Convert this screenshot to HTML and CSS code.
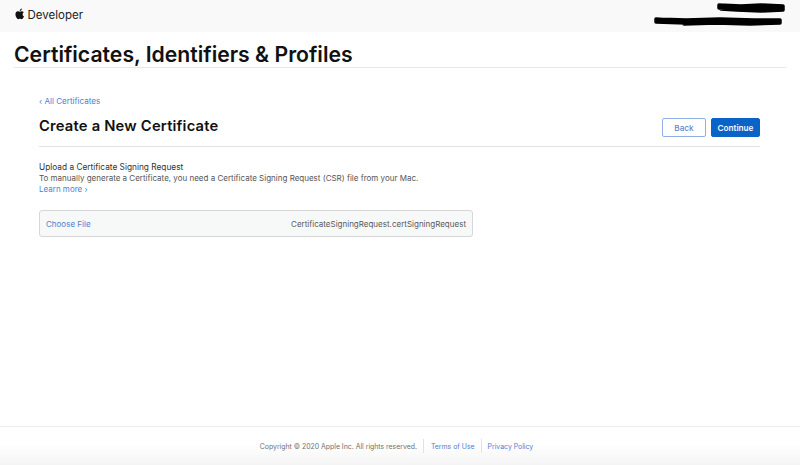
FILE: index.html
```html
<!DOCTYPE html>
<html lang="en">
<head>
<meta charset="utf-8">
<title>Create a New Certificate</title>
<link rel="stylesheet" href="styles.css">
</head>
<body>
<header class="topbar">
  <div class="brand">
    <svg class="apple" viewBox="3 1.500 18 21.500" aria-hidden="true"><path d="M18.710 19.500c-.83 1.240-1.710 2.450-3.050 2.470-1.340.03-1.770-.79-3.290-.79-1.530 0-2 .77-3.270.82-1.310.05-2.300-1.320-3.140-2.530C4.250 17 2.940 12.450 4.700 9.390c.87-1.520 2.430-2.480 4.120-2.510 1.280-.02 2.500.87 3.290.87.78 0 2.260-1.070 3.810-.91.65.03 2.470.26 3.640 1.980-.09.06-2.170 1.280-2.150 3.810.03 3.020 2.650 4.030 2.680 4.040-.03.07-.42 1.440-1.380 2.830M13 3.500c.73-.83 1.940-1.460 2.940-1.500.13 1.170-.34 2.350-1.040 3.190-.69.85-1.830 1.510-2.950 1.420-.15-1.150.41-2.350 1.050-3.110z"/></svg>
    <span class="brand-name">Developer</span>
  </div>
  <svg class="redact" viewBox="0 0 150 28" aria-hidden="true">
    <path class="scribble" d="M69 5l22 1 20-1 22 1 0 2-20 0-20 1-24-1 0-3 26 2 20-1 18 1 0 3-22 1-24-1-16-1" />
    <path class="scribble" d="M6 19l30 1 34-1 34 1 26 0 0 2-30 1-30-1-34 1-30-1 0-3 28 2 36-1 30 1 30-1 0 3-30 1-34-1-32 1" />
  </svg>
</header>
<div class="page-title-wrap"><h1 class="page-title">Certificates, Identifiers &amp; Profiles</h1></div>
<main class="main">
  <a class="back-link" href="#">‹ All Certificates</a>
  <div class="head-row">
    <h2 class="section-title">Create a New Certificate</h2>
    <div class="actions">
      <button class="btn btn-back">Back</button>
      <button class="btn btn-continue">Continue</button>
    </div>
  </div>
  <section class="upload">
    <h3 class="upload-title">Upload a Certificate Signing Request</h3>
    <p class="upload-text">To manually generate a Certificate, you need a Certificate Signing Request (CSR) file from your Mac.</p>
    <a class="learn" href="#">Learn more ›</a>
    <div class="file-box">
      <a class="choose" href="#">Choose File</a>
      <span class="file-name">CertificateSigningRequest.certSigningRequest</span>
    </div>
  </section>
</main>
<footer class="footer">
  <span class="copy">Copyright © 2020 Apple Inc. All rights reserved.</span>
  <a class="foot-link foot-terms" href="#">Terms of Use</a>
  <a class="foot-link" href="#">Privacy Policy</a>
</footer>
</body>
</html>
```
FILE: styles.css
```css
* { box-sizing: border-box; }
html, body { margin: 0; height: 465px; overflow: hidden; }
body {
  font-family: Inter, "Liberation Sans", sans-serif;
  background: #fff;
  color: #333;
  display: flex;
  flex-direction: column;
}
a { color: #4a82d4; text-decoration: none; }
.topbar {
  height: 32px;
  flex: none;
  background: #f9f9f9;
  display: flex;
  justify-content: space-between;
  align-items: flex-start;
  padding: 0 0 0 15px;
}
.brand { display: flex; align-items: center; gap: 3px; height: 30px; }
.apple { width: 9.500px; height: 12px; fill: #111; margin-bottom: 2px; }
.brand-name { font-size: 11.500px; color: #222; }
.redact { width: 150px; height: 28px; flex: none; }
.scribble { fill: none; stroke: #000; stroke-width: 3.500; stroke-linejoin: round; stroke-linecap: round; }
.page-title-wrap { margin: 0 14px; height: 36px; border-bottom: 1px solid #e8e8e8; flex: none; }
.page-title { margin: 0; padding-top: 10px; font-size: 21.200px; line-height: 25px; font-weight: 600; color: #111; }
.main { flex: 1; padding: 27px 40px 0 39px; }
.back-link { display: block; font-size: 8.100px; line-height: 12px; }
.head-row {
  display: flex;
  justify-content: space-between;
  align-items: flex-end;
  height: 40px;
  padding-bottom: 9px;
  border-bottom: 1px solid #e4e4e4;
}
.section-title { margin: 0 0 1px; font-size: 14.750px; line-height: 20px; font-weight: 600; color: #111; letter-spacing: .2px; }
.actions { display: flex; gap: 5px; }
.btn {
  height: 19px;
  border-radius: 2px;
  font: 500 8.200px Inter, "Liberation Sans", sans-serif;
  padding: 0;
}
.btn-back { width: 44px; background: #fff; border: 1px solid #8fb0e4; color: #5b8ad0; }
.btn-continue { width: 49px; background: #0a64c8; border: 1px solid #0a64c8; color: #f4f8fd; font-weight: 600; }
.upload { padding-top: 15px; }
.upload-title { margin: 0; font-size: 8.300px; line-height: 11px; font-weight: 400; color: #333; }
.upload-text { margin: 0; font-size: 8px; line-height: 11px; color: #555; }
.learn { display: block; font-size: 8px; line-height: 11px; }
.file-box {
  margin-top: 15px;
  width: 434px;
  height: 27px;
  display: flex;
  justify-content: space-between;
  align-items: center;
  padding: 0 6px;
  background: #f7f8f8;
  border: 1px solid #d6d6d6;
  border-radius: 3px;
  font-size: 8px;
}
.file-name { color: #5a5a5a; }
.footer {
  flex: none;
  height: 39px;
  border-top: 1px solid #ececec;
  display: flex;
  justify-content: center;
  align-items: center;
  font-size: 6.900px;
  background: linear-gradient(#fff 45%, #f4f4f4);
}
.copy { color: #707070; padding-right: 6px; }
.foot-link { padding: 3px 7px 2px 6px; border-left: 1px solid #e2e2e2; }
.foot-terms { padding: 3px 6px 2px 7px; }
```
